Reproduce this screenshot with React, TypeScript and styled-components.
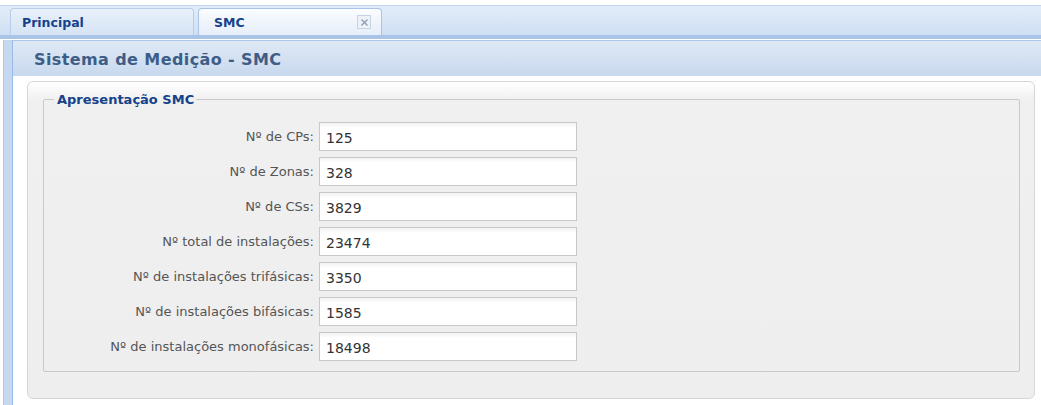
import React from "react";
import styled, { createGlobalStyle } from "styled-components";

const Global = createGlobalStyle`
  html, body { margin: 0; padding: 0; background: #ffffff; }
  body { font-family: Tahoma, "DejaVu Sans", sans-serif; }
  * { box-sizing: border-box; }
`;

const Page = styled.div`
  width: 1041px;
  height: 405px;
  padding-top: 5px;
  overflow: hidden;
  background: #ffffff;
`;

const TabStrip = styled.div`
  height: 34px;
  display: flex;
  align-items: flex-end;
  gap: 4px;
  padding-left: 10px;
  background: linear-gradient(#e3edf9, #cfdff3);
  border-top: 1px solid #c3d6ee;
  border-bottom: 4px solid #a9c4e6;
`;

const Tab = styled.div<{ $active?: boolean }>`
  width: 184px;
  height: 27px;
  display: flex;
  align-items: center;
  justify-content: space-between;
  padding: 0 8px 0 ${(p) => (p.$active ? 15 : 11)}px;
  border: 1px solid ${(p) => (p.$active ? "#a8c3e5" : "#b8cde8")};
  border-bottom: none;
  border-radius: 4px 4px 0 0;
  background: ${(p) =>
    p.$active
      ? "linear-gradient(#fafcff, #e6eef9)"
      : "linear-gradient(#e8f0fa, #d5e3f4)"};
  font-family: "DejaVu Sans", sans-serif;
  font-weight: bold;
  font-size: 12.5px;
  color: #15428b;
`;

const Close = styled.span`
  width: 14px;
  height: 14px;
  display: flex;
  align-items: center;
  justify-content: center;
  border: 1px solid #c6d3e3;
  background: #eef2f8;
  margin-right: 2px;
`;

const Window = styled.div`
  margin-top: 1px;
  margin-left: 3px;
  height: 366px;
  display: flex;
  flex-direction: column;
  background: #c6d8ef;
  border-left: 1px solid #b3cbe9;
  padding-left: 8px;
`;

const Header = styled.div`
  height: 36px;
  flex-shrink: 0;
  display: flex;
  align-items: center;
  padding: 1px 0 0 21px;
  border-left: 1px solid #99bbe8;
  border-top: 1px solid #aac6ea;
  background: linear-gradient(#dfe9f5, #c8d9ee);
  font-family: "DejaVu Sans", Verdana, sans-serif;
  font-weight: bold;
  font-size: 16px;
  letter-spacing: 0.4px;
  color: #3e5d86;
`;

const Body = styled.div`
  flex: 1;
  display: flex;
  background: #ffffff;
  border-left: 1px solid #99bbe8;
  padding: 5px 6px 7px 14px;
`;

const Panel = styled.div`
  flex: 1;
  display: flex;
  border: 1px solid #d6d6d6;
  border-radius: 6px;
  background: linear-gradient(#ffffff 0px, #f0f0f0 18px, #eeeeee 100%);
  padding: 10px 14px 26px 15px;
`;

const FieldSet = styled.fieldset`
  flex: 1;
  margin: 0;
  padding: 15px 0 0 0;
  border: 1px solid #c9c9c9;
  border-radius: 2px;
  display: flex;
  flex-direction: column;
  gap: 6px;
`;

const Legend = styled.legend`
  margin-left: 10px;
  padding: 0 2px 0 3px;
  font-family: "DejaVu Sans", sans-serif;
  font-weight: bold;
  font-size: 13px;
  color: #15428b;
`;

const Row = styled.div`
  display: grid;
  grid-template-columns: 270px 258px;
  column-gap: 5px;
  align-items: center;
  height: 29px;
`;

const Label = styled.label`
  text-align: right;
  font-family: "DejaVu Sans", sans-serif;
  font-size: 13px;
  color: #555555;
`;

const Input = styled.div`
  height: 29px;
  display: flex;
  align-items: center;
  padding: 3px 0 0 6px;
  border: 1px solid #c8c8c8;
  background: linear-gradient(#f2f2f2 0px, #ffffff 5px);
  font-family: "DejaVu Sans", sans-serif;
  font-size: 14px;
  color: #333333;
`;

const rows: [string, string][] = [
  ["Nº de CPs:", "125"],
  ["Nº de Zonas:", "328"],
  ["Nº de CSs:", "3829"],
  ["Nº total de instalações:", "23474"],
  ["Nº de instalações trifásicas:", "3350"],
  ["Nº de instalações bifásicas:", "1585"],
  ["Nº de instalações monofásicas:", "18498"],
];

export default function App() {
  return (
    <Page>
      <Global />
      <TabStrip>
        <Tab>Principal</Tab>
        <Tab $active>
          SMC
          <Close>
            <svg width="9" height="9" viewBox="0 0 9 9">
              <path d="M1.5 1.5 L7.5 7.5 M7.5 1.5 L1.5 7.5" stroke="#8a9bb3" strokeWidth="1.3" />
            </svg>
          </Close>
        </Tab>
      </TabStrip>
      <Window>
        <Header>Sistema de Medição - SMC</Header>
        <Body>
          <Panel>
            <FieldSet>
              <Legend>Apresentação SMC</Legend>
              {rows.map(([l, v]) => (
                <Row key={l}>
                  <Label>{l}</Label>
                  <Input>{v}</Input>
                </Row>
              ))}
            </FieldSet>
          </Panel>
        </Body>
      </Window>
    </Page>
  );
}
